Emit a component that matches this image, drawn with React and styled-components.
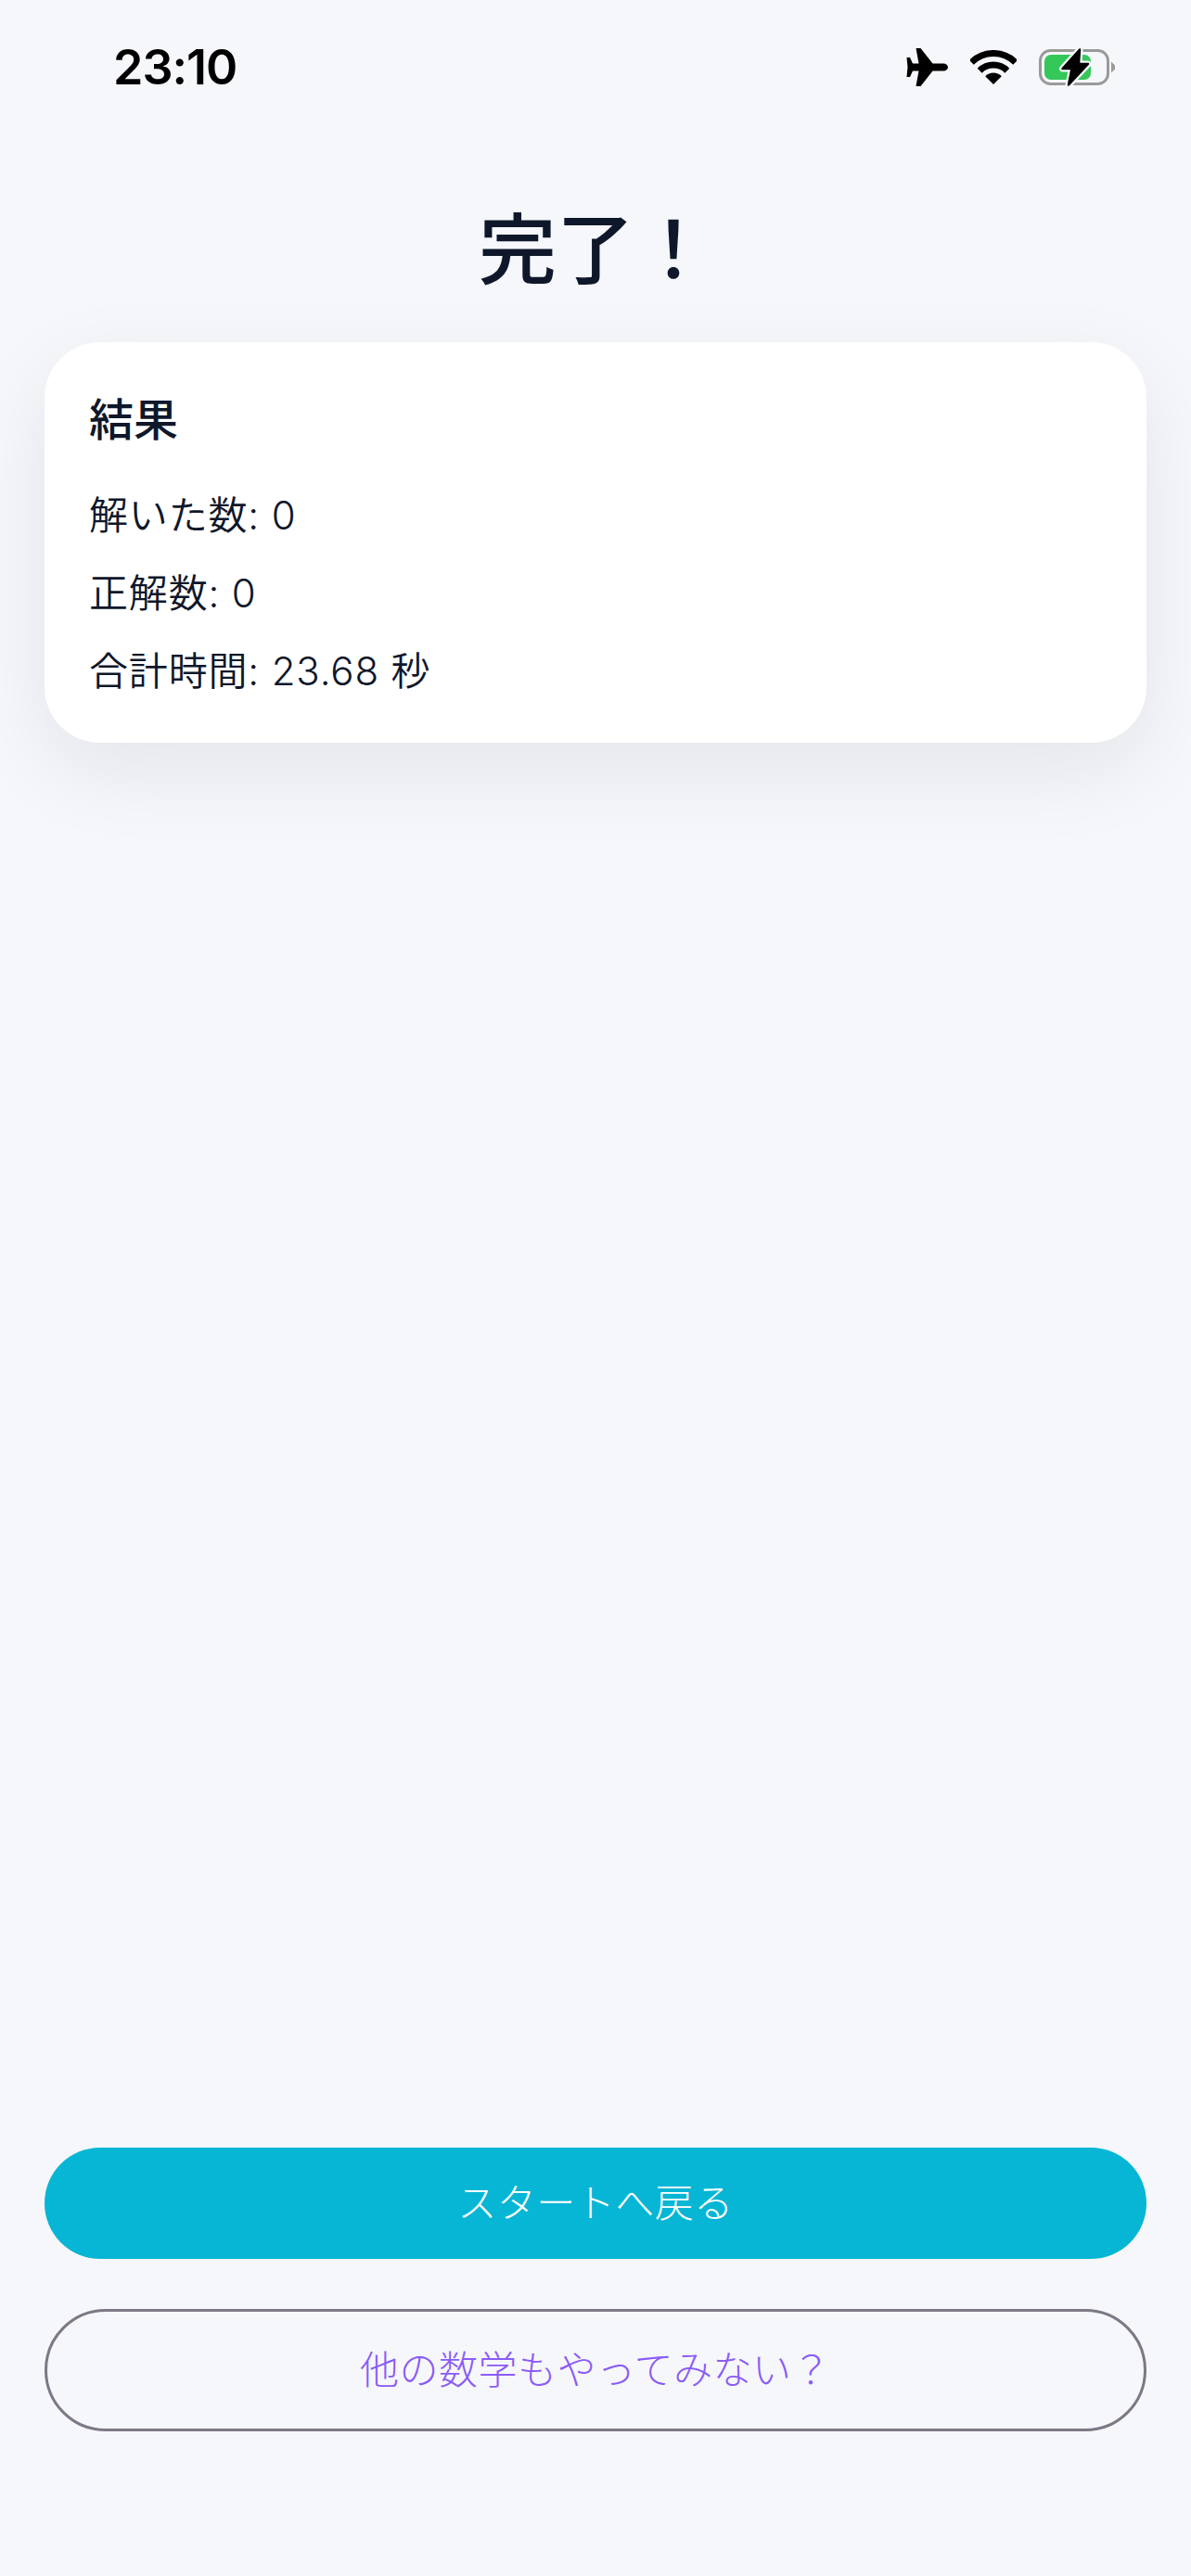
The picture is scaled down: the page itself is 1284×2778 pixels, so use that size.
import React from 'react'
import styled, { createGlobalStyle } from 'styled-components'

const GlobalStyle = createGlobalStyle`
  html, body {
    margin: 0;
    padding: 0;
    background: #f6f7fb;
  }
  * { box-sizing: border-box; }
`

const Screen = styled.div`
  width: 1284px;
  height: 2778px;
  display: flex;
  flex-direction: column;
  background: #f6f7fb;
  color: #0f172a;
  font-family: Inter, "Noto Sans CJK JP", sans-serif;
  overflow: hidden;
`

const StatusBar = styled.div`
  height: 145px;
  flex: none;
  display: flex;
  justify-content: space-between;
  align-items: center;
  padding: 0 82px 0 122px;
`

const Clock = styled.span`
  font-size: 52px;
  font-weight: 600;
  color: #000;
  letter-spacing: -1px;
`

const StatusIcons = styled.div`
  display: flex;
  align-items: center;
  gap: 24px;
`

const Main = styled.main`
  flex: 1;
  display: flex;
  flex-direction: column;
  padding: 0 48px 156px;
`

const Title = styled.h1`
  margin: 0;
  height: 224px;
  padding-top: 33px;
  line-height: 184px;
  text-align: center;
  font-size: 84px;
  font-weight: 500;
`

const Card = styled.section`
  height: 432px;
  padding: 48px 48px;
  background: #fff;
  border-radius: 60px;
  box-shadow: 0 30px 90px rgba(15, 23, 42, 0.08);
`

const CardTitle = styled.h2`
  margin: 0 0 25px;
  font-size: 48px;
  line-height: 72px;
  font-weight: 500;
`

const ResultLine = styled.p`
  margin: 0;
  font-size: 42px;
  line-height: 84px;
  font-weight: 350;
  letter-spacing: 0.84px;
`

const Actions = styled.div`
  margin-top: auto;
  display: flex;
  flex-direction: column;
  gap: 54px;
`

const PillButton = styled.button`
  width: 100%;
  height: ${p => (p.$outline ? '132px' : '120px')};
  border-radius: 66px;
  border: ${p => (p.$outline ? '3px solid #7c7885' : 'none')};
  background: ${p => (p.$outline ? 'transparent' : '#06b6d4')};
  color: ${p => (p.$outline ? '#8b5cf6' : '#fff')};
  font-family: inherit;
  font-size: 42px;
  font-weight: 300;
  letter-spacing: 0.5px;
  padding: 0 0 7px;
`

const Airplane = () => (
  <svg width="45" height="41" viewBox="0 0 45 41">
    <path d="M45 20.5C45 22.5 43 24.5 40 24.5H28.5L15.5 41H10.5L13.5 24.5H7L4 31H.5L1.5 20.5L.5 10H4L7 16.5H13.5L10.5 0H15.5L28.5 16.5H40C43 16.5 45 18.5 45 20.5Z" fill="#000" />
  </svg>
)

const Wifi = () => (
  <svg width="50" height="37" viewBox="0 0 50 37">
    <path d="M1.3 13.3A33.5 33.5 0 0 1 48.7 13.3" fill="none" stroke="#000" strokeWidth="7" />
    <path d="M10.2 22.2A21 21 0 0 1 39.8 22.2" fill="none" stroke="#000" strokeWidth="7" />
    <path d="M25 37L16.2 28.2A12.5 12.5 0 0 1 33.8 28.2Z" fill="#000" />
  </svg>
)

const BOLT = 'M44 1.5L25.5 22H35.5L32 39.5L53 17H43Z'

const Battery = () => (
  <svg width="82" height="41" viewBox="0 0 82 41">
    <rect x="1.5" y="2.5" width="73" height="36" rx="11" fill="none" stroke="#9a9a9a" strokeWidth="3" />
    <rect x="6" y="7" width="50" height="27" rx="7" fill="#34c759" />
    <path d="M78 14.5L82 18.5V22.5L78 26.5Z" fill="#9a9a9a" />
    <path d={BOLT} fill="#f6f7fb" stroke="#f6f7fb" strokeWidth="7" strokeLinejoin="round" />
    <path d={BOLT} fill="#000" stroke="#000" strokeWidth="2.5" strokeLinejoin="round" />
  </svg>
)

export default function App() {
  return (
    <>
      <GlobalStyle />
      <Screen>
        <StatusBar>
          <Clock>23:10</Clock>
          <StatusIcons>
            <Airplane />
            <Wifi />
            <Battery />
          </StatusIcons>
        </StatusBar>
        <Main>
          <Title>完了！</Title>
          <Card>
            <CardTitle>結果</CardTitle>
            <ResultLine>解いた数: 0</ResultLine>
            <ResultLine>正解数: 0</ResultLine>
            <ResultLine>合計時間: 23.68 秒</ResultLine>
          </Card>
          <Actions>
            <PillButton>スタートへ戻る</PillButton>
            <PillButton $outline>他の数学もやってみない？</PillButton>
          </Actions>
        </Main>
      </Screen>
    </>
  )
}
